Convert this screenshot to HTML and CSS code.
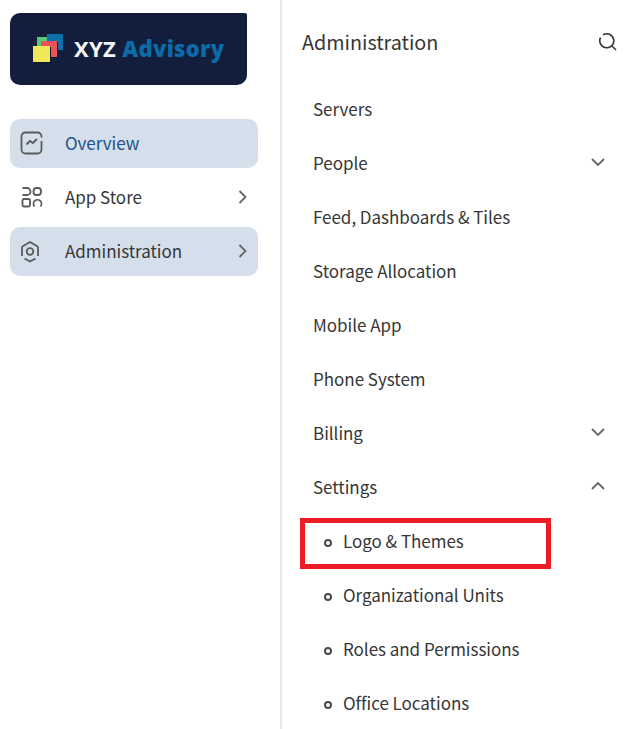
FILE: index.html
```html
<!DOCTYPE html>
<html lang="en">
<head>
	<meta charset="UTF-8">
	<title>Administration</title>
	<link rel="stylesheet" href="styles.css">
</head>
<body>
<div class="page">
	<aside class="sidebar">
		<div class="logo">
			<svg class="logoMark" width="30" height="28" viewBox="0 0 30 28">
				<rect x="4" y="3" width="14" height="16" fill="#5cc77c"/>
				<rect x="14" y="0" width="16" height="16" fill="#0f6fa8"/>
				<rect x="9" y="8" width="16" height="16" fill="#0c1830"/>
				<rect x="8" y="7" width="16" height="16" fill="#ee5258"/>
				<rect x="1" y="13" width="17" height="16" fill="#0c1830"/>
				<rect x="0" y="12" width="17" height="16" fill="#f0e858"/>
			</svg>
			<span class="logoText">XYZ <b>Advisory</b></span>
		</div>
		<nav class="mainNav">
			<a class="navItem active">
				<svg class="navIcon" width="24" height="24" viewBox="0 0 24 24"><path d="M21.500 6.500V5.500a4 4 0 0 0-4-4h-12a4 4 0 0 0-4 4v13a4 4 0 0 0 4 4h12a4 4 0 0 0 4-4V10"/><path d="M6.500 13.500l3.500-3.500 3 2 4-4"/></svg>
				<span class="navLabel">Overview</span>
			</a>
			<a class="navItem">
				<svg class="navIcon" width="24" height="24" viewBox="0 0 24 24"><path d="M2.500 3H7a3.500 3.500 0 0 1 0 7H2.500"/><rect x="13.500" y="3" width="7.500" height="7" rx="3"/><rect x="2.500" y="14" width="7.500" height="7.500" rx="1.500"/><path d="M14.500 21.500a4 4 0 1 1 6 0"/></svg>
				<span class="navLabel">App Store</span>
				<svg class="navArrow" width="12" height="16" viewBox="0 0 12 16"><path d="M2.500 2l6 6-6 6"/></svg>
			</a>
			<a class="navItem active admin">
				<svg class="navIcon" width="24" height="24" viewBox="0 0 24 24"><path d="M2 17V8.500a1.500 1.500 0 0 1 .8-1.300L10 3l7.200 4.200a1.500 1.500 0 0 1 .8 1.300V17"/><path d="M4.500 19.500l5.500 3 5.500-3"/><circle cx="10" cy="12.500" r="3.300"/></svg>
				<span class="navLabel">Administration</span>
				<svg class="navArrow" width="12" height="16" viewBox="0 0 12 16"><path d="M2.500 2l6 6-6 6"/></svg>
			</a>
		</nav>
	</aside>
	<main class="panel">
		<header class="panelHead">
			<h1>Administration</h1>
			<svg class="search" width="20" height="20" viewBox="0 0 20 20"><path d="M5 3.900A7 7 0 1 1 2.500 6.700"/><path d="M14 15l4 4"/></svg>
		</header>
		<ul class="menu">
			<li><span>Servers</span></li>
			<li><span>People</span><svg class="chevron" width="16" height="10" viewBox="0 0 16 10"><path d="M2 2l6 6 6-6"/></svg></li>
			<li><span>Feed, Dashboards &amp; Tiles</span></li>
			<li><span>Storage Allocation</span></li>
			<li><span>Mobile App</span></li>
			<li><span>Phone System</span></li>
			<li><span>Billing</span><svg class="chevron" width="16" height="10" viewBox="0 0 16 10"><path d="M2 2l6 6 6-6"/></svg></li>
			<li><span>Settings</span><svg class="chevron" width="16" height="10" viewBox="0 0 16 10"><path d="M2 8l6-6 6 6"/></svg></li>
			<li class="sub highlight"><span>Logo &amp; Themes</span></li>
			<li class="sub"><span>Organizational Units</span></li>
			<li class="sub"><span>Roles and Permissions</span></li>
			<li class="sub"><span>Office Locations</span></li>
		</ul>
	</main>
</div>
</body>
</html>
```

FILE: styles.css
```css
html, body {
	margin: 0;
	height: 100%;
	overflow: hidden;
}
body {
	background: #fff;
	color: #363636;
	font-family: "Noto Sans CJK KR", "Noto Sans", sans-serif;
	font-size: 17px;
	letter-spacing: -0.03px;
}

.page {
	display: flex;
	height: 729px;
}

.sidebar {
	box-sizing: border-box;
	width: 282px;
	padding: 13px 22px 0 10px;
	border-right: 2px solid #e6e6ee;
}

.logo {
	display: flex;
	align-items: center;
	box-sizing: border-box;
	width: 237px;
	height: 72px;
	padding: 0 0 2px 23px;
	background: #121e3b;
	border-radius: 10px 2px 10px 10px;
}
.logoMark {
	flex: none;
	margin-right: 11px;
	overflow: visible;
}
.logoText {
	color: #f4f5f7;
	font-family: "Noto Sans", sans-serif;
	font-size: 22px;
	font-weight: 700;
	letter-spacing: 0.3px;
	white-space: nowrap;
}
.logoText b {
	color: #0c6ba8;
}

.mainNav {
	display: flex;
	flex-direction: column;
	gap: 5px;
	margin-top: 34px;
}
.navItem {
	display: flex;
	align-items: center;
	box-sizing: border-box;
	height: 49px;
	padding: 0 9px 2px 10px;
	border-radius: 10px;
}
.navItem.active {
	background: #d4dfeb;
}
.navItem.active .navLabel {
	color: #1d5288;
}
.navItem.admin .navLabel {
	color: #363636;
}
.navIcon {
	flex: none;
	margin-right: 21px;
	fill: none;
	stroke: #5a5a5a;
	stroke-width: 1.8;
}
.navLabel {
	flex: 1;
}
.navArrow {
	flex: none;
	fill: none;
	stroke: #666;
	stroke-width: 1.8;
}

.panel {
	flex: 1;
	position: relative;
	padding: 0 20px;
}
.panelHead {
	display: flex;
	align-items: center;
	justify-content: space-between;
	height: 40px;
	margin: 21px -6px 0 0;
}
.panelHead h1 {
	margin: 0;
	font-size: 19.800px;
	font-weight: 400;
}
.search {
	fill: none;
	stroke: #333;
	stroke-width: 1.6;
}

.menu {
	list-style: none;
	margin: 20px 0 0 0;
	padding: 0;
}
.menu li {
	display: flex;
	align-items: center;
	justify-content: space-between;
	height: 54px;
	padding: 0 6px 0 11px;
}
.chevron {
	fill: none;
	stroke: #666;
	stroke-width: 1.8;
}
.menu .sub {
	position: relative;
	padding-left: 41px;
}
.menu .sub::before {
	content: "";
	position: absolute;
	left: 22px;
	top: 26px;
	box-sizing: border-box;
	width: 8px;
	height: 8px;
	border: 2px solid #4a4a4a;
	border-radius: 50%;
}
.menu .highlight::after {
	content: "";
	position: absolute;
	left: -2px;
	top: 5px;
	box-sizing: border-box;
	width: 251px;
	height: 51px;
	border: 5px solid #ed1c24;
}
```
